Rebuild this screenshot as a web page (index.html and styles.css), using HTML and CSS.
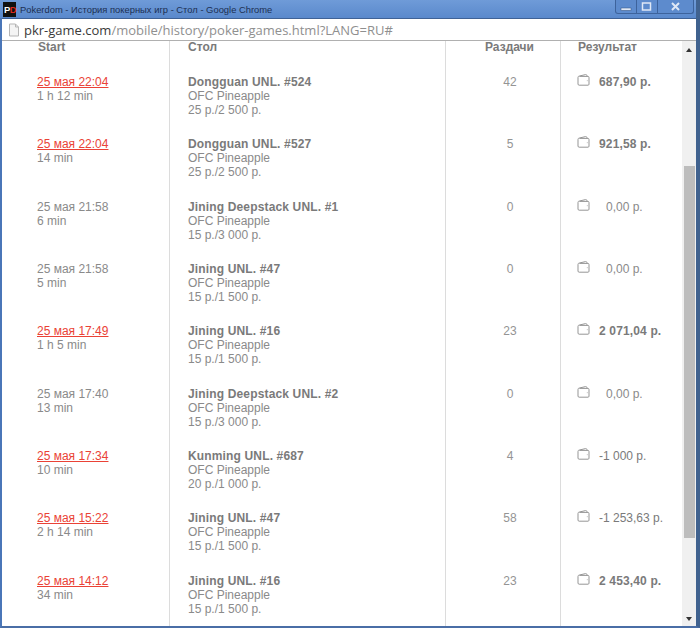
FILE: index.html
```html
<!DOCTYPE html>
<html lang="ru">
<head>
<meta charset="utf-8">
<title>Pokerdom</title>
<link rel="stylesheet" href="styles.css">
</head>
<body>
<div class="window">
  <header class="titlebar">
    <div class="logo"><span class="logo-p">P</span><span class="logo-d">D</span></div>
    <div class="title">Pokerdom - История покерных игр - Стол - Google Chrome</div>
    <div class="controls">
      <div class="ctl ctl-min"><svg width="12" height="10" viewBox="0 0 12 10"><rect x="1" y="6" width="10" height="2.4" fill="#dfe8f6" stroke="#33507f" stroke-width=".5"/></svg></div>
      <div class="ctl ctl-max"><svg width="12" height="10" viewBox="0 0 12 10"><rect x="1.5" y="1" width="8" height="7" fill="none" stroke="#dfe8f6" stroke-width="1.5"/></svg></div>
      <div class="ctl ctl-close"><svg width="12" height="10" viewBox="0 0 12 10"><path d="M2 1l7 7M9 1L2 8" stroke="#dfe8f6" stroke-width="2"/></svg></div>
    </div>
  </header>
  <div class="addressbar">
    <svg class="page-icon" width="12" height="14" viewBox="0 0 12 14"><path d="M1.5 1h6l3 3v9h-9z" fill="#f4f4f4" stroke="#b5b5b5"/><path d="M7.5 1v3h3" fill="none" stroke="#b5b5b5"/></svg>
    <span class="url"><span class="host">pkr-game.com</span>/mobile/history/poker-games.html?LANG=RU#</span>
  </div>
  <div class="viewport">
    <main class="content">
      <div class="row head">
        <div class="c c1">Start</div><div class="c c2">Стол</div><div class="c c3">Раздачи</div><div class="c c4">Результат</div>
      </div>
      <div class="rows" id="rows">
        <div class="row item">
          <div class="c c1"><a class="d" href="#">25 мая 22:04</a><div>1 h 12 min</div></div>
          <div class="c c2"><b>Dongguan UNL. #524</b><div>OFC Pineapple</div><div>25 р./2 500 р.</div></div>
          <div class="c c3">42</div>
          <div class="c c4"><svg class="w"><use href="#wallet"/></svg><b>687,90 р.</b></div>
        </div>
        <div class="row item">
          <div class="c c1"><a class="d" href="#">25 мая 22:04</a><div>14 min</div></div>
          <div class="c c2"><b>Dongguan UNL. #527</b><div>OFC Pineapple</div><div>25 р./2 500 р.</div></div>
          <div class="c c3">5</div>
          <div class="c c4"><svg class="w"><use href="#wallet"/></svg><b>921,58 р.</b></div>
        </div>
        <div class="row item">
          <div class="c c1"><div>25 мая 21:58</div><div>6 min</div></div>
          <div class="c c2"><b>Jining Deepstack UNL. #1</b><div>OFC Pineapple</div><div>15 р./3 000 р.</div></div>
          <div class="c c3">0</div>
          <div class="c c4"><svg class="w"><use href="#wallet"/></svg><span class="zero">0,00 р.</span></div>
        </div>
        <div class="row item">
          <div class="c c1"><div>25 мая 21:58</div><div>5 min</div></div>
          <div class="c c2"><b>Jining UNL. #47</b><div>OFC Pineapple</div><div>15 р./1 500 р.</div></div>
          <div class="c c3">0</div>
          <div class="c c4"><svg class="w"><use href="#wallet"/></svg><span class="zero">0,00 р.</span></div>
        </div>
        <div class="row item">
          <div class="c c1"><a class="d" href="#">25 мая 17:49</a><div>1 h 5 min</div></div>
          <div class="c c2"><b>Jining UNL. #16</b><div>OFC Pineapple</div><div>15 р./1 500 р.</div></div>
          <div class="c c3">23</div>
          <div class="c c4"><svg class="w"><use href="#wallet"/></svg><b>2 071,04 р.</b></div>
        </div>
        <div class="row item">
          <div class="c c1"><div>25 мая 17:40</div><div>13 min</div></div>
          <div class="c c2"><b>Jining Deepstack UNL. #2</b><div>OFC Pineapple</div><div>15 р./3 000 р.</div></div>
          <div class="c c3">0</div>
          <div class="c c4"><svg class="w"><use href="#wallet"/></svg><span class="zero">0,00 р.</span></div>
        </div>
        <div class="row item">
          <div class="c c1"><a class="d" href="#">25 мая 17:34</a><div>10 min</div></div>
          <div class="c c2"><b>Kunming UNL. #687</b><div>OFC Pineapple</div><div>20 р./1 000 р.</div></div>
          <div class="c c3">4</div>
          <div class="c c4"><svg class="w"><use href="#wallet"/></svg><span>-1 000 р.</span></div>
        </div>
        <div class="row item">
          <div class="c c1"><a class="d" href="#">25 мая 15:22</a><div>2 h 14 min</div></div>
          <div class="c c2"><b>Jining UNL. #47</b><div>OFC Pineapple</div><div>15 р./1 500 р.</div></div>
          <div class="c c3">58</div>
          <div class="c c4"><svg class="w"><use href="#wallet"/></svg><span>-1 253,63 р.</span></div>
        </div>
        <div class="row item">
          <div class="c c1"><a class="d" href="#">25 мая 14:12</a><div>34 min</div></div>
          <div class="c c2"><b>Jining UNL. #16</b><div>OFC Pineapple</div><div>15 р./1 500 р.</div></div>
          <div class="c c3">23</div>
          <div class="c c4"><svg class="w"><use href="#wallet"/></svg><b>2 453,40 р.</b></div>
        </div>
      </div>
    </main>
    <div class="scrollbar">
      <div class="arrow-up"></div>
      <div class="track"><div class="thumb"></div></div>
      <div class="arrow-down"></div>
    </div>
  </div>
</div>
<svg width="0" height="0" class="defs">
  <symbol id="wallet" viewBox="0 0 13 12">
    <path d="M1 3.5 C1 2.5 1.5 2.2 2.5 2 L8.5 .6 C9.5 .4 10 1 10 2.4 M1 3.5 V10 C1 10.8 1.4 11.2 2.2 11.2 H11 C11.6 11.2 12 10.8 12 10.2 V3.6 C12 2.8 11.6 2.4 11 2.4 H2.5 M10.3 6.5 v.6" fill="none" stroke="#959595" stroke-width="1"/>
  </symbol>
</svg>
</body>
</html>
```
FILE: styles.css
```css
* { box-sizing: border-box; }
html, body { margin: 0; padding: 0; height: 100%; overflow: hidden; }
body { background: #fff; font-family: "Liberation Sans", Arial, sans-serif; }
.defs { position: absolute; }
.window {
  width: 700px; height: 628px; display: flex; flex-direction: column;
  background: #4f7cc0;
  border-left: 2px solid #4a76b8; border-right: 4px solid #40628f; border-bottom: 2px solid #4a6ea6;
}
.titlebar {
  height: 18px; margin-left: -2px; display: flex; align-items: center; flex: none;
  background: linear-gradient(#6f9bd8, #5a89cc);
}
.logo { width: 13px; height: 15px; margin-left: 3px; padding-left: 1px; background: #111; display: flex; font: bold 9.5px/15px "Liberation Sans", sans-serif; letter-spacing: -.6px; flex: none; }
.logo-p { color: #fff; }
.logo-d { color: #d8291e; }
.title { margin-left: 4px; font-size: 9.4px; color: #1c2f52; white-space: nowrap; flex: 1; }
.controls { display: flex; height: 14px; margin: -4px 2px 0 0; border: 1px solid #3d639c; border-top: 0; border-radius: 0 0 3px 3px; background: #5d8bcd; }
.ctl { display: flex; align-items: center; justify-content: center; height: 100%; border-right: 1px solid #3d639c; }
.ctl-min, .ctl-max { width: 21px; }
.ctl-close { width: 35px; border-right: 0; }
.addressbar {
  height: 23px; flex: none; background: #fff; display: flex; align-items: center; padding-left: 6px;
  border-top: 1px solid #3f6296; border-bottom: 1px solid #b0b0b0;
}
.page-icon { flex: none; margin-right: 4px; }
.url { font-family: "Open Sans", "Liberation Sans", sans-serif; font-size: 13px; color: #8f8f8f; white-space: nowrap; }
.host { color: #3a3a3a; }
.viewport { flex: 1; min-height: 0; display: flex; background: #fff; }
.content { flex: 1; min-width: 0; overflow: hidden; font-size: 12px; color: #8a8a8a; line-height: 14px; }
.row { display: grid; grid-template-columns: 168px 276px 115px 1fr; }
.c { border-right: 1px solid #dcdcdc; }
.c4 { border-right: 0; }
.head { height: 34px; font-weight: bold; color: #7a7a7a; }
.head .c { line-height: 13px; }
.head .c1 { padding-left: 36px; }
.head .c2 { padding-left: 18px; }
.head .c3 { padding-left: 39px; }
.head .c4 { padding-left: 17px; }
.item { height: 62.33px; }
.item .c1 { padding-left: 35px; }
.item .c2 { padding-left: 18px; }
.item .c3 { text-align: center; padding-left: 14px; color: #949494; }
.item .c4 { padding-left: 16px; display: flex; align-items: flex-start; color: #7a7a7a; }
.item b { color: #7a7a7a; letter-spacing: .15px; }
.d { color: #ea4236; text-decoration: underline; display: block; }
.w { width: 13px; height: 12px; flex: none; margin-right: 9px; margin-top: -1px; }
.zero { margin-left: 7px; color: #8a8a8a; }
.scrollbar { width: 14px; flex: none; background: #f0f0f0; display: flex; flex-direction: column; align-items: center; }
.arrow-up { width: 0; height: 0; margin: 7px 0 0; border: 3px solid transparent; border-top: 0; border-bottom: 4px solid #333; flex: none; }
.track { flex: 1; width: 100%; padding: 114px 1px 0 2px; }
.thumb { height: 372px; background: #bdbdbd; }
.arrow-down { width: 0; height: 0; margin: 0 0 5px; border: 3px solid transparent; border-bottom: 0; border-top: 4px solid #333; flex: none; }
```
